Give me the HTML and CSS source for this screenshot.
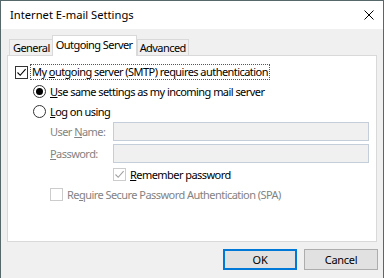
FILE: index.html
```html
<!DOCTYPE html>
<html>
<head>
<meta charset="utf-8">
<link rel="stylesheet" href="styles.css">
</head>
<body>
<div class="window">
  <div class="titlebar">
    <span class="title">Internet E-mail Settings</span>
    <svg class="close" width="10" height="10" viewBox="0 0 10 10"><path d="M0.5 0.5 L9.5 9.5 M9.5 0.5 L0.5 9.5" stroke="#000" stroke-width="1"/></svg>
  </div>
  <div class="client">
    <div class="tabs">
      <div class="tab first">General</div>
      <div class="tab selected">Outgoing Server</div>
      <div class="tab">Advanced</div>
    </div>
    <div class="panel">
      <div class="row r1">
        <span class="cb on"><svg width="11" height="11" viewBox="0 0 11 11"><path d="M1.5 5.5 L4.2 8.3 L9.6 2.2" fill="none" stroke="#000" stroke-width="1.1"/></svg></span>
        <span class="lbl focus">My <u>o</u>utgoing server (SMTP) requires authentication</span>
      </div>
      <div class="row r2 indent1">
        <span class="radio sel"></span>
        <span class="lbl"><u>U</u>se same settings as my incoming mail server</span>
      </div>
      <div class="row r3 indent1">
        <span class="radio"></span>
        <span class="lbl"><u>L</u>og on using</span>
      </div>
      <div class="row r4 indent2">
        <span class="flabel dis">User <u>N</u>ame:</span>
        <span class="field"></span>
      </div>
      <div class="row r5 indent2">
        <span class="flabel dis"><u>P</u>assword:</span>
        <span class="field"></span>
      </div>
      <div class="row r6 indent3">
        <span class="cb dim"><svg width="11" height="11" viewBox="0 0 11 11"><path d="M1.5 5.5 L4.2 8.3 L9.6 2.2" fill="none" stroke="#a0a0a0" stroke-width="1.1"/></svg></span>
        <span class="lbl"><u>R</u>emember password</span>
      </div>
      <div class="row r7 indent2">
        <span class="cb dim"></span>
        <span class="lbl dis">Re<u>q</u>uire Secure Password Authentication (SPA)</span>
      </div>
    </div>
    <div class="buttons">
      <button class="btn default">OK</button>
      <button class="btn">Cancel</button>
    </div>
  </div>
</div>
</body>
</html>
```
FILE: styles.css
```css
html, body {
  margin: 0;
  padding: 0;
  background: #fff;
}
.window {
  width: 384px;
  height: 278px;
  box-sizing: border-box;
  border: 1px solid #56686a;
  border-bottom: none;
  display: flex;
  flex-direction: column;
  font-family: "Noto Sans", "Open Sans", sans-serif;
  font-size: 11px;
  color: #000;
}
.titlebar {
  height: 28px;
  flex: none;
  background: #fff;
  display: flex;
  align-items: center;
  justify-content: space-between;
  padding: 0 9px 0 9px;
}
.title {
  font-size: 11.2px;
  margin-top: -1px;
}
.client {
  flex: 1;
  background: #f0f0f0;
  padding: 6px 6px 0 6px;
  display: flex;
  flex-direction: column;
  letter-spacing: -0.55px;
}
.tabs {
  display: flex;
  height: 20px;
  align-items: flex-end;
  position: relative;
  z-index: 1;
  padding-left: 2px;
}
.tab {
  height: 14px;
  border: 1px solid #d9d9d9;
  border-bottom: none;
  background: #f0f0f0;
  padding: 1px 2px 0 2px;
  display: flex;
  align-items: center;
  line-height: 14px;
}
.tab.first {
  border-right: none;
  padding-left: 3px;
}
.tab.selected {
  height: 20px;
  background: #fff;
  margin-bottom: -1px;
  padding: 0 3px;
  align-items: flex-start;
  line-height: 17px;
}
.panel {
  height: 177px;
  background: #fff;
  border: 1px solid #d9d9d9;
  padding-top: 8px;
  flex: none;
}
.row {
  display: flex;
  align-items: center;
  padding-left: 7px;
}
.indent1 { padding-left: 25px; }
.indent2 { padding-left: 42px; }
.indent3 { padding-left: 105px; }
.r1 { height: 16px; }
.r2 { height: 20px; margin-top: 1px; }
.r3 { height: 20px; }
.r4 { height: 19px; margin-top: 1px; }
.r5 { height: 19px; margin-top: 3px; }
.r6 { height: 13px; margin-top: 5px; }
.r7 { height: 13px; margin-top: 7px; }
.cb {
  width: 11px;
  height: 11px;
  border: 1px solid #333;
  background: #fff;
  display: inline-flex;
  flex: none;
}
.cb.dim {
  border-color: #cccccc;
}
.radio {
  width: 11px;
  height: 11px;
  border: 1px solid #333;
  border-radius: 50%;
  background: #fff;
  flex: none;
  position: relative;
}
.radio.sel::after {
  content: "";
  position: absolute;
  left: 2px;
  top: 2px;
  width: 7px;
  height: 7px;
  border-radius: 50%;
  background: #000;
}
.lbl {
  margin-left: 4px;
  white-space: nowrap;
}
.lbl.focus {
  outline: 1px dotted #555;
  outline-offset: 0;
  padding: 0 1px;
  margin-left: 3px;
  line-height: 14px;
}
.dis {
  color: #838383;
}
.flabel {
  width: 63px;
  flex: none;
  white-space: nowrap;
}
.field {
  width: 254px;
  height: 17px;
  border: 1px solid #c4cedb;
  background: #f0f0f0;
  flex: none;
}
.buttons {
  display: flex;
  justify-content: flex-end;
  gap: 7px;
  margin-top: 7px;
  margin-right: -1px;
}
.btn {
  width: 74px;
  height: 21px;
  box-sizing: border-box;
  border: 1px solid #adadad;
  background: #e1e1e1;
  font-family: inherit;
  font-size: 11px;
  letter-spacing: -0.3px;
  padding: 0;
  color: #000;
}
.btn.default {
  border: 1px solid #0078d7;
  box-shadow: inset 0 0 0 1px #0078d7;
}
```
